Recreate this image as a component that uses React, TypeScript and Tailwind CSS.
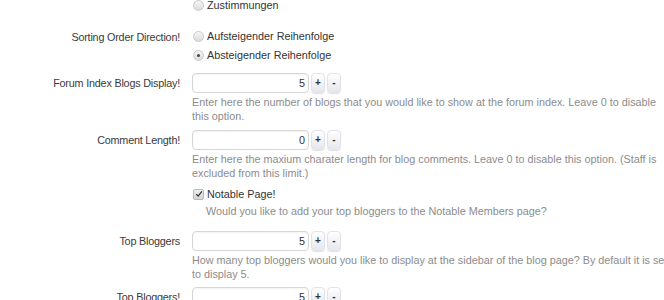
import React from 'react'

const font = { fontFamily: '"Liberation Sans", Arial, sans-serif' }

function Radio({ checked }: { checked?: boolean }) {
  return (
    <span className="relative inline-block h-[11px] w-[11px] shrink-0 rounded-full border border-[#cacaca] bg-gradient-to-b from-[#f6f6f6] to-[#dcdcdc]">
      {checked && <span className="absolute left-[3px] top-[3px] h-[3px] w-[3px] rounded-full bg-[#444]" />}
    </span>
  )
}

function Checkbox() {
  return (
    <span className="inline-flex h-[11px] w-[11px] shrink-0 items-center justify-center rounded-[2px] border border-[#b8b8b8] bg-gradient-to-b from-[#eeeeee] to-[#d4d4d4]">
      <svg viewBox="0 0 10 10" className="h-[8px] w-[8px]">
        <path d="M1.5 5.2 L4 7.6 L8.6 1.8" fill="none" stroke="#333" strokeWidth="1.6" />
      </svg>
    </span>
  )
}

function Option({ label, checked }: { label: string; checked?: boolean }) {
  return (
    <div className="flex h-[19px] items-center gap-[3px] pl-[1px] text-[#333]">
      <Radio checked={checked} />
      <span>{label}</span>
    </div>
  )
}

function Spinner({ value }: { value: string }) {
  return (
    <div className="flex h-[20px] items-center">
      <div className="flex h-[20px] w-[117px] items-center justify-end rounded-[4px] border border-[#d6d6d6] bg-white pr-[3px] text-[#333] shadow-[inset_0_1px_2px_rgba(0,0,0,0.05)]">
        {value}
      </div>
      <button className="ml-[2px] flex h-[20px] w-[14px] items-center justify-center rounded-[4px] border border-[#e2e2ea] bg-gradient-to-b from-[#ffffff] to-[#e6e6ee] text-[10px] font-bold leading-none text-[#333] shadow-[0_1px_1px_rgba(0,0,0,0.12)]">
        +
      </button>
      <button className="ml-[2px] flex h-[20px] w-[14px] items-center justify-center rounded-[4px] border border-[#e2e2ea] bg-gradient-to-b from-[#ffffff] to-[#e6e6ee] text-[10px] font-bold leading-none text-[#333] shadow-[0_1px_1px_rgba(0,0,0,0.12)]">
        -
      </button>
    </div>
  )
}

function Row({ label, children, className }: { label?: string; children: React.ReactNode; className?: string }) {
  return (
    <div className={'flex ' + (className ?? '')}>
      <div className="w-[180px] shrink-0 whitespace-nowrap text-right leading-[20px] tracking-[-0.2px] text-[#3a3a3a]">
        {label}
      </div>
      <div className="ml-[12px] whitespace-nowrap">{children}</div>
    </div>
  )
}

function Hint({ lines }: { lines: string[] }) {
  return (
    <div className="mt-[2px] leading-[14px] text-[#8c8c8c]">
      {lines.map((l) => (
        <div key={l}>{l}</div>
      ))}
    </div>
  )
}

export default function App() {
  return (
    <div className="h-[300px] w-[664px] overflow-hidden bg-white text-[10.8px]" style={font}>
      <div className="-mt-[4px]">
        <Row>
          <Option label="Zustimmungen" />
        </Row>

        <Row label="Sorting Order Direction!" className="mt-[12px]">
          <Option label="Aufsteigender Reihenfolge" />
          <Option label="Absteigender Reihenfolge" checked />
        </Row>

        <Row label="Forum Index Blogs Display!" className="mt-[8px]">
          <Spinner value="5" />
          <Hint
            lines={[
              'Enter here the number of blogs that you would like to show at the forum index. Leave 0 to disable',
              'this option.',
            ]}
          />
        </Row>

        <Row label="Comment Length!" className="mt-[7px]">
          <Spinner value="0" />
          <Hint
            lines={[
              'Enter here the maxium charater length for blog comments. Leave 0 to disable this option. (Staff is',
              'excluded from this limit.)',
            ]}
          />
        </Row>

        <Row className="mt-[6px]">
          <div className="flex h-[16px] items-center gap-[3px] pl-[1px] text-[#333]">
            <Checkbox />
            <span>Notable Page!</span>
          </div>
          <div className="mt-[1px] pl-[14px] leading-[16px] text-[#8c8c8c]">
            Would you like to add your top bloggers to the Notable Members page?
          </div>
        </Row>

        <Row label="Top Bloggers" className="mt-[12px]">
          <Spinner value="5" />
          <Hint
            lines={[
              'How many top bloggers would you like to display at the sidebar of the blog page? By default it is set',
              'to display 5.',
            ]}
          />
        </Row>

        <Row label="Top Bloggers!" className="mt-[6px]">
          <Spinner value="5" />
        </Row>
      </div>
    </div>
  )
}
